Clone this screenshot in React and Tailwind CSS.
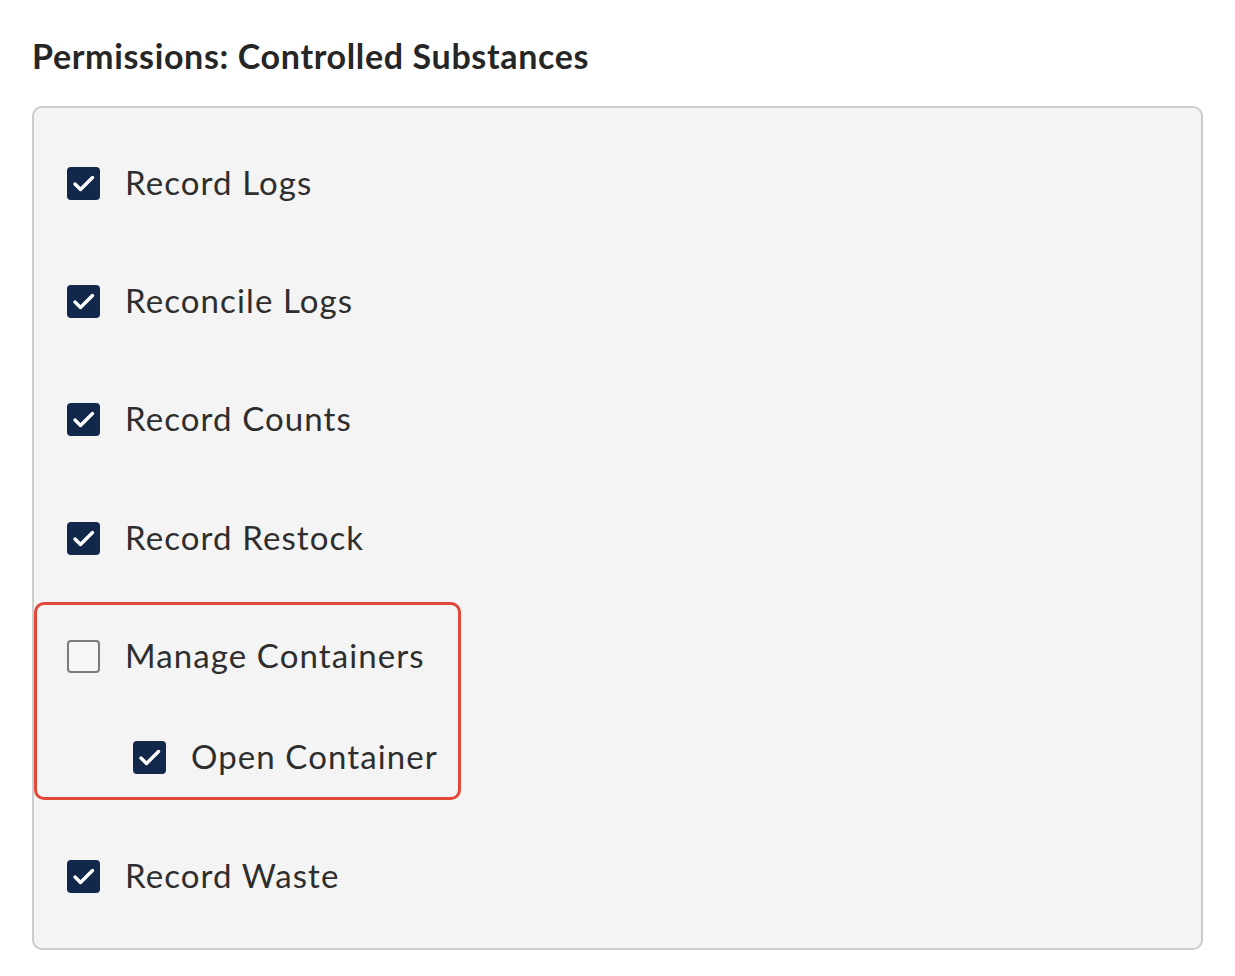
import React from 'react';

const Check = ({ checked }) =>
  checked ? (
    <span className="flex h-[33px] w-[33px] shrink-0 items-center justify-center rounded-[4px] bg-[#12284a]">
      <svg viewBox="0 0 33 33" className="h-[33px] w-[33px]" fill="none" stroke="white" strokeWidth="3.4" strokeLinecap="round" strokeLinejoin="round">
        <polyline points="8,17 13.5,22.5 25.5,10.5" />
      </svg>
    </span>
  ) : (
    <span className="h-[33px] w-[33px] shrink-0 rounded-[4px] border-2 border-[#7a7a7a] bg-[#f6f6f6]" />
  );

const Row = ({ label, checked = true, className = '' }) => (
  <label className={`flex h-[36px] items-center gap-[25px] ${className}`}>
    <Check checked={checked} />
    <span className="-mt-[2px] text-[33px] leading-none tracking-[1.1px] text-[#2e2e2e]">{label}</span>
  </label>
);

export default function App() {
  return (
    <div className="min-h-screen bg-white px-[32px] pt-[36px] font-['Lato','Open_Sans',sans-serif]">
      <h2 className="text-[34px] font-bold leading-[40px] tracking-[0.65px] text-[#262626]">
        Permissions: Controlled Substances
      </h2>
      <div className="mt-[30px] h-[844px] w-[1171px] rounded-[10px] border-2 border-[#cdcdcd] bg-[#f4f4f4] pt-[57px]">
        <div className="pl-[33px]">
          <Row label="Record Logs" />
          <Row label="Reconcile Logs" className="mt-[82px]" />
          <Row label="Record Counts" className="mt-[82px]" />
          <Row label="Record Restock" className="mt-[83px]" />
        </div>
        <div className="mt-[46px] w-[427px] rounded-[10px] border-[3px] border-[#e2483a] pb-[22px] pl-[30px] pt-[33px]">
          <Row label="Manage Containers" checked={false} />
          <Row label="Open Container" className="ml-[66px] mt-[65px]" />
        </div>
        <div className="mt-[58px] pl-[33px]">
          <Row label="Record Waste" />
        </div>
      </div>
    </div>
  );
}
